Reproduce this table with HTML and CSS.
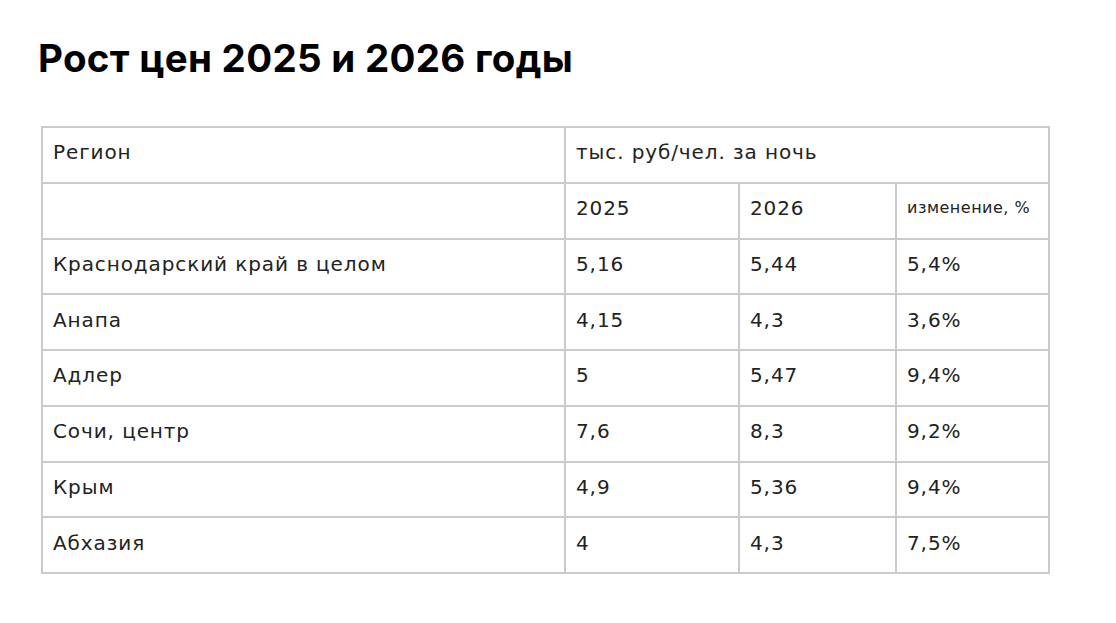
FILE: index.html
```html
<!DOCTYPE html>
<html lang="ru">
<head>
<meta charset="utf-8">
<link rel="stylesheet" href="styles.css">
</head>
<body>
<div class="page">
  <h1 class="title">Рост цен 2025 и 2026 годы</h1>
  <table class="prices">
    <colgroup>
      <col class="c1"><col class="c2"><col class="c3"><col class="c4">
    </colgroup>
    <tr><td>Регион</td><td colspan="3">тыс. руб/чел. за ночь</td></tr>
    <tr><td></td><td>2025</td><td>2026</td><td class="small">изменение, %</td></tr>
    <tr><td>Краснодарский край в целом</td><td>5,16</td><td>5,44</td><td>5,4%</td></tr>
    <tr><td>Анапа</td><td>4,15</td><td>4,3</td><td>3,6%</td></tr>
    <tr><td>Адлер</td><td>5</td><td>5,47</td><td>9,4%</td></tr>
    <tr><td>Сочи, центр</td><td>7,6</td><td>8,3</td><td>9,2%</td></tr>
    <tr><td>Крым</td><td>4,9</td><td>5,36</td><td>9,4%</td></tr>
    <tr><td>Абхазия</td><td>4</td><td>4,3</td><td>7,5%</td></tr>
  </table>
</div>
</body>
</html>
```
FILE: styles.css
```css
html, body { margin: 0; padding: 0; background: #fff; }
body { font-family: "DejaVu Sans", "Inter", sans-serif; color: #222; }
.page { padding: 33px 0 0 38px; }
.title {
  font-family: "Inter", sans-serif;
  margin: 0 0 43px 0;
  font-size: 38.5px;
  font-weight: 700;
  color: #000;
  letter-spacing: 0.3px;
  line-height: 50px;
}
.prices {
  border-collapse: collapse;
  width: 1007px;
  margin-left: 3px;
  table-layout: fixed;
}
.c1 { width: 523px; }
.c2 { width: 174px; }
.c3 { width: 157px; }
.c4 { width: 153px; }
.prices td {
  border: 2px solid #cbcbcb;
  height: 48.75px;
  padding: 0 10px 5px 10px;
  font-size: 20px;
  letter-spacing: 0.9px;
  color: #222;
  vertical-align: middle;
}
.prices td.small {
  font-size: 16px;
  letter-spacing: 0.5px;
  height: 46.75px;
  padding-bottom: 7px;
}
```
